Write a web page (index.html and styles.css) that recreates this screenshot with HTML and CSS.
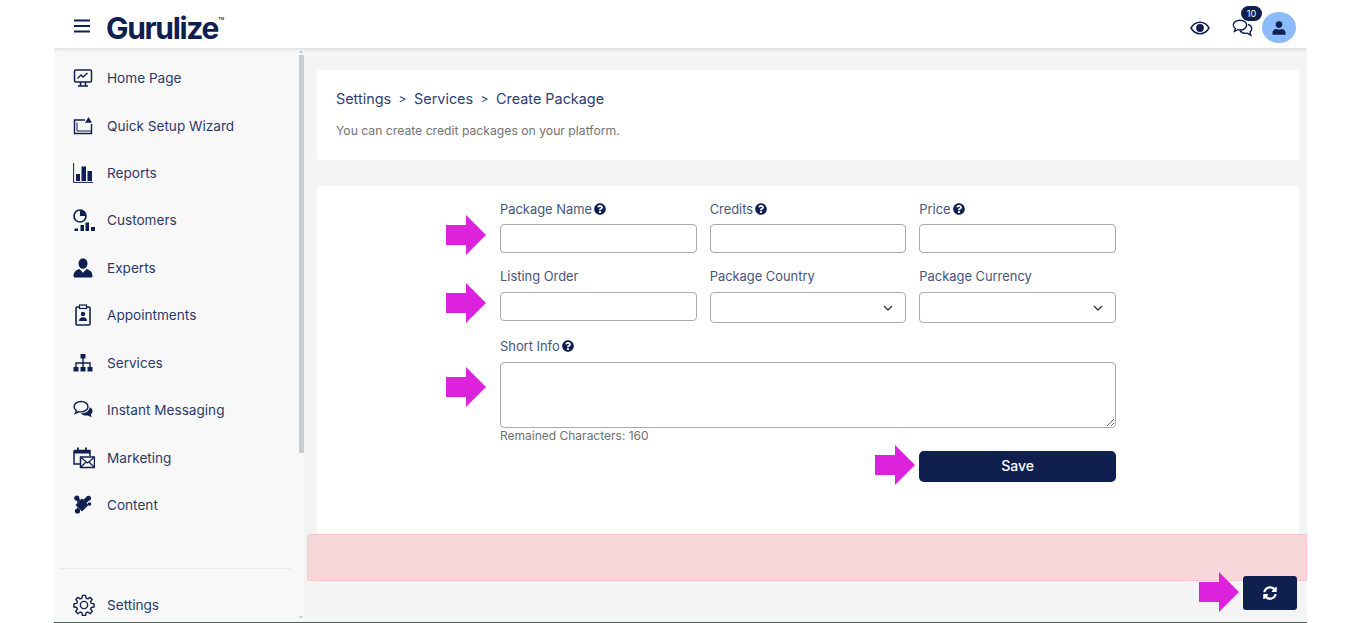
FILE: index.html
```html
<!DOCTYPE html>
<html lang="en">
<head>
<meta charset="utf-8">
<title>Gurulize - Create Package</title>
<link rel="stylesheet" href="styles.css">
</head>
<body>
<svg class="defs" width="0" height="0" aria-hidden="true">
  <symbol id="q" viewBox="0 0 512 512"><path d="M504 256c0 136.997-111.043 248-248 248S8 392.997 8 256C8 119.083 119.043 8 256 8s248 111.083 248 248zM262.655 90c-54.497 0-89.255 22.957-116.549 63.758-3.536 5.286-2.353 12.415 2.715 16.258l34.699 26.31c5.205 3.947 12.621 3.008 16.665-2.122 17.864-22.658 30.113-35.797 57.303-35.797 20.429 0 45.698 13.148 45.698 32.958 0 14.976-12.363 22.667-32.534 33.976C247.128 238.528 216 254.941 216 296v4c0 6.627 5.373 12 12 12h56c6.627 0 12-5.373 12-12v-1.333c0-28.462 83.186-29.647 83.186-106.667 0-58.002-60.165-102-116.531-102zM256 338c-25.365 0-46 20.635-46 46 0 25.364 20.635 46 46 46s46-20.636 46-46c0-25.365-20.635-46-46-46z"/></symbol>
  <symbol id="arrow" viewBox="0 0 40 40"><path d="M0 10h20V0l20 20-20 20V30H0z"/></symbol>
  <symbol id="chev" viewBox="0 0 12 8"><path d="M2 2 6 6l4-4" fill="none" stroke="currentColor" stroke-width="1.300"/></symbol>
</svg>
<div class="app">
  <header class="topbar">
    <div class="brand">
      <svg class="burger" viewBox="0 0 16 14"><path d="M0 1.500h16M0 7h16M0 12.500h16" stroke="currentColor" stroke-width="1.800"/></svg>
      <span class="logo">Gurulize<sup class="tm">TM</sup></span>
    </div>
    <div class="tools">
      <svg class="tool-eye" viewBox="0 0 20 14"><path d="M1 7c2.200-3.800 5.400-5.700 9-5.700S16.800 3.200 19 7c-2.200 3.800-5.400 5.700-9 5.700S3.200 10.800 1 7z" fill="none" stroke="currentColor" stroke-width="1.500"/><circle cx="10" cy="7" r="3.900" fill="currentColor"/></svg>
      <div class="chat">
        <svg class="tool-chat" viewBox="0 0 21 18"><path d="M8 1.200c3.700 0 6.600 2.100 6.600 4.900s-2.900 4.900-6.600 4.900c-.8 0-1.500-.1-2.200-.3L2.500 12.300l.9-2.600C2 8.800 1.300 7.500 1.300 6.100 1.300 3.300 4.300 1.200 8 1.200z" fill="none" stroke="currentColor" stroke-width="1.400"/><path d="M16 5.500c2.300.7 3.700 2.300 3.700 4.200 0 1.300-.7 2.500-1.800 3.300l.9 3.200-3.600-2c-3 .5-5.800-.6-7.200-2.700" fill="none" stroke="currentColor" stroke-width="1.400"/></svg>
        <span class="badge">10</span>
      </div>
      <div class="avatar">
        <svg viewBox="0 0 14 14"><circle cx="7" cy="3.600" r="3.300"/><path d="M0.500 13.800v-2c0-2.500 2-3.800 3.800-3.800.9.400 1.800.600 2.700.6s1.800-.2 2.700-.6c1.800 0 3.800 1.300 3.800 3.800v2z"/></svg>
      </div>
    </div>
  </header>

  <div class="body">
    <aside class="sidebar">
      <div class="side-col">
        <nav class="nav">
          <a class="nav-item"><svg class="ico" viewBox="0 0 20 20"><rect x="1.500" y="2" width="17" height="12" rx="1.500" fill="none" stroke="currentColor" stroke-width="1.500"/><path d="M4.500 10.500 8 7l2 2 4.500-4" fill="none" stroke="currentColor" stroke-width="1.300"/><path d="M7.500 14v3.500M12.500 14v3.500M5 18h10" stroke="currentColor" stroke-width="1.500"/></svg>Home Page</a>
          <a class="nav-item"><svg class="ico" viewBox="0 0 20 20"><path d="M12 4H1.500v13.500h17V8" fill="none" stroke="currentColor" stroke-width="1.400"/><path d="M4 15V6.500" stroke="currentColor" stroke-width="1"/><path d="M4 15h14" stroke="currentColor" stroke-width="1"/><path d="M15.500 1 19 6.800h-7z" fill="currentColor"/></svg>Quick Setup Wizard</a>
          <a class="nav-item"><svg class="ico" viewBox="0 0 20 20"><path d="M.6 0v19.400h19.400" fill="none" stroke="currentColor" stroke-width="1"/><path d="M3 11h4v7H3zM8.500 3.500h4.500V18H8.500zM14.500 8H19v10h-4.500z" fill="currentColor"/></svg>Reports</a>
          <a class="nav-item"><svg class="ico ico-lg" viewBox="0 0 22 22"><circle cx="7" cy="7" r="6" fill="none" stroke="currentColor" stroke-width="1.700"/><path d="M7 7V1a6 6 0 0 1 6 6z" fill="currentColor"/><path d="M1.500 19.500h3.500V22H1.500zM7.500 16h3.500v6H7.500zM12.500 13.500H16V22h-3.500zM18 18h4v4h-4z" fill="currentColor"/></svg>Customers</a>
          <a class="nav-item"><svg class="ico" viewBox="0 0 20 20"><ellipse cx="10" cy="5.500" rx="4.500" ry="5.300" fill="currentColor"/><path d="M0.500 18c0-3.800 2.800-6.200 6-7l3.500 3.800 3.500-3.800c3.200.8 6 3.200 6 7 0 .8-.6 1.500-1.500 1.500H2c-.9 0-1.500-.7-1.500-1.500z" fill="currentColor"/></svg>Experts</a>
          <a class="nav-item"><svg class="ico ico-tall" viewBox="0 0 20 22"><rect x="3" y="3" width="14" height="18" rx="1" fill="none" stroke="currentColor" stroke-width="1.600"/><rect x="6.500" y="1" width="7" height="3.500" fill="#f8f8f8" stroke="currentColor" stroke-width="1.200"/><circle cx="10" cy="10" r="2.200" fill="currentColor"/><path d="M6 17c0-2.500 1.800-3.700 4-3.700s4 1.200 4 3.700z" fill="currentColor"/></svg>Appointments</a>
          <a class="nav-item"><svg class="ico" viewBox="0 0 20 20"><path d="M7.500 1h5v4.500h-5zM.5 14h5v4.500h-5zM7.500 14h5v4.500h-5zM14.500 14h5v4.500h-5z" fill="currentColor"/><path d="M10 5v9M3 14v-4h14v4" fill="none" stroke="currentColor" stroke-width="1.400"/></svg>Services</a>
          <a class="nav-item"><svg class="ico" viewBox="0 0 21 20"><path d="M8.500 1c4 0 7.200 2.400 7.200 5.500s-3.200 5.500-7.200 5.500c-.9 0-1.600-.1-2.400-.3L2.500 13.500l1-3C2 9.500 1.200 8.100 1.200 6.500 1.200 3.400 4.500 1 8.500 1z" fill="none" stroke="currentColor" stroke-width="1.500"/><path d="M17.500 7c2 1 3.200 2.500 3 4.500-.1 1.200-.8 2.200-1.800 3l.8 3.200-3.800-2c-3 .6-6-.2-7.700-2.300 4 .5 9-1.500 9.500-6.400z" fill="currentColor"/></svg>Instant Messaging</a>
          <a class="nav-item"><svg class="ico ico-lg" viewBox="0 0 22 22"><path d="M1 3.500h16V9M1 3.500V17h6" fill="none" stroke="currentColor" stroke-width="1.500"/><path d="M1 3h16v3.500H1zM4 .5h1.800v3H4zM12 .5h1.800v3H12z" fill="currentColor"/><rect x="7.500" y="10" width="14" height="10.500" fill="#f8f8f8" stroke="currentColor" stroke-width="1.500"/><path d="m8 10.500 6.500 5.500 6.500-5.500M8 20l5-5M21 20l-5-5" fill="none" stroke="currentColor" stroke-width="1.200"/></svg>Marketing</a>
          <a class="nav-item"><svg class="ico" viewBox="0 0 20 20"><g fill="currentColor"><path d="M9 3.500 15.500 10 9 16.500 2.500 10z"/><circle cx="3.800" cy="3" r="2.600"/><path d="m3 3 5 1.500L4.500 8z"/><circle cx="15.500" cy="3.200" r="2.500"/><path d="m10 5 4-3.500 2 4-3 3z"/><circle cx="4.500" cy="16" r="2.600"/><path d="m4 12 3 3-3 2z"/><circle cx="16.500" cy="9" r="1.800"/></g></svg>Content</a>
        </nav>
        <div class="side-foot">
          <a class="nav-item nav-item-foot"><svg class="ico ico-lg" viewBox="0 0 24 24"><path d="M10.300 1.500h3.400l.5 3 1.900.8 2.500-1.800 2.400 2.400-1.800 2.500.8 1.900 3 .5v3.400l-3 .5-.8 1.900 1.800 2.500-2.400 2.400-2.500-1.800-1.900.8-.5 3h-3.400l-.5-3-1.900-.8-2.500 1.800-2.400-2.400 1.800-2.500-.8-1.900-3-.5v-3.400l3-.5.8-1.900-1.800-2.500 2.400-2.400 2.500 1.800 1.900-.8z" fill="none" stroke="currentColor" stroke-width="1.500" stroke-linejoin="round"/><circle cx="12" cy="12" r="4" fill="none" stroke="currentColor" stroke-width="1.500"/></svg>Settings</a>
        </div>
      </div>
      <div class="scroll">
        <span class="scroll-up"></span>
        <div class="scroll-thumb"></div>
        <span class="scroll-down"></span>
      </div>
    </aside>

    <main class="main">
      <section class="card head-card">
        <p class="crumbs"><span>Settings</span><span class="sep">&gt;</span><span>Services</span><span class="sep">&gt;</span><span>Create Package</span></p>
        <p class="sub">You can create credit packages on your platform.</p>
      </section>

      <section class="card form-card">
        <form class="form">
          <div class="field"><label class="label">Package Name<svg class="help"><use href="#q"/></svg></label><input class="control" type="text"></div>
          <div class="field"><label class="label">Credits<svg class="help"><use href="#q"/></svg></label><input class="control" type="text"></div>
          <div class="field"><label class="label">Price<svg class="help"><use href="#q"/></svg></label><input class="control" type="text"></div>
          <div class="field"><label class="label label-loose">Listing Order</label><input class="control" type="text"></div>
          <div class="field"><label class="label label-loose">Package Country</label><div class="select"><svg class="chev"><use href="#chev"/></svg></div></div>
          <div class="field"><label class="label label-loose">Package Currency</label><div class="select"><svg class="chev"><use href="#chev"/></svg></div></div>
          <div class="field field-wide"><label class="label label-loose">Short Info<svg class="help"><use href="#q"/></svg></label><textarea class="area"></textarea><span class="remain">Remained Characters: 160</span></div>
          <button class="save" type="button">Save</button>
        </form>
        <svg class="arrow a1"><use href="#arrow"/></svg>
        <svg class="arrow a2"><use href="#arrow"/></svg>
        <svg class="arrow a3"><use href="#arrow"/></svg>
        <svg class="arrow a4"><use href="#arrow"/></svg>
      </section>

      <div class="alert"></div>

      <div class="actions">
        <svg class="arrow a5"><use href="#arrow"/></svg>
        <button class="refresh" type="button"><svg viewBox="0 0 512 512"><path d="M370.72 133.28C339.458 104.008 298.888 87.962 255.848 88c-77.458.068-144.328 53.178-162.791 126.85-1.344 5.363-6.122 9.15-11.651 9.15H24.103c-7.498 0-13.194-6.807-11.807-14.176C33.933 94.924 134.813 8 256 8c66.448 0 126.791 26.136 171.315 68.685L463.03 40.97C478.149 25.851 504 36.559 504 57.941V192c0 13.255-10.745 24-24 24H345.941c-21.382 0-32.09-25.851-16.971-40.971l41.75-41.749zM32 296h134.059c21.382 0 32.09 25.851 16.971 40.971l-41.75 41.75c31.262 29.273 71.835 45.319 114.876 45.28 77.418-.07 144.315-53.144 162.787-126.849 1.344-5.363 6.122-9.15 11.651-9.15h57.304c7.498 0 13.194 6.807 11.807 14.176C478.067 417.076 377.187 504 256 504c-66.448 0-126.791-26.136-171.315-68.685L48.97 471.03C33.851 486.149 8 475.441 8 454.059V320c0-13.255 10.745-24 24-24z"/></svg></button>
      </div>
    </main>
  </div>
</div>
</body>
</html>
```

FILE: styles.css
```css
* { box-sizing: border-box; }
html, body { margin: 0; padding: 0; height: 100%; background: #fff; overflow: hidden; }
body { font-family: Inter, "Noto Sans", "Liberation Sans", sans-serif; color: #2c3a6a; }
.defs { position: absolute; }

.app { margin: 0 54px; width: 1253px; height: 623px; display: flex; flex-direction: column; border-bottom: 1px solid #4c5f50; overflow: hidden; }

.topbar { height: 48px; flex: none; display: flex; align-items: center; justify-content: space-between; background: #fff; box-shadow: 0 1px 4px rgba(0,0,0,.14); position: relative; z-index: 2; padding: 7px 11px 0 20px; }
.brand { display: flex; align-items: center; gap: 16px; }
.burger { width: 16px; height: 14px; color: #0f2050; position: relative; top: -2px; }
.logo { font-size: 30px; font-weight: 700; letter-spacing: -1.35px; color: #0f2050; line-height: 1; }
.tm { font-size: 4px; font-weight: 500; letter-spacing: 0; vertical-align: 19px; line-height: 0; }
.tools { display: flex; align-items: center; }
.tool-eye { width: 20px; height: 14px; color: #0f2050; margin-right: 22px; }
.chat { position: relative; width: 21px; height: 18px; margin-right: 9px; }
.tool-chat { width: 21px; height: 18px; color: #0f2050; display: block; }
.badge { position: absolute; left: 9px; top: -13px; width: 21px; height: 15px; border-radius: 8px; background: #0f2050; color: #fff; font-size: 9px; line-height: 15px; text-align: center; }
.avatar { width: 34px; height: 31px; border-radius: 50%; background: #8cbbfb; display: flex; align-items: center; justify-content: center; }
.avatar svg { width: 14px; height: 14px; fill: #0f2050; }

.body { flex: 1; display: flex; min-height: 0; }

.sidebar { width: 250px; flex: none; background: #f8f8f8; display: flex; }
.side-col { flex: 1; min-width: 0; display: flex; flex-direction: column; padding: 6.4px 7px 0 6px; }
.nav { display: flex; flex-direction: column; flex: none; height: 513.6px; }
.nav-item { height: 47.44px; flex: none; display: flex; align-items: center; gap: 14px; font-size: 13.6px; color: #2c3a6a; padding-left: 13px; }
.nav-item-foot { height: 36px; }
.ico { width: 20px; height: 20px; flex: none; color: #0f2050; }
.ico-lg { width: 22px; height: 22px; margin-right: -2px; }
.ico-tall { height: 22px; }
.side-foot { flex: none; border-top: 1px solid #e9e9e9; padding-top: 18px; }
.scroll { width: 6px; flex: none; padding-top: 2px; display: flex; flex-direction: column; align-items: center; }
.scroll-up { width: 0; height: 0; border: 2px solid transparent; border-top: 0; border-bottom: 3px solid #c9ccd2; margin-bottom: 2px; }
.scroll-thumb { height: 398px; background: #c9ccd2; width: 5px; }
.scroll-down { width: 0; height: 0; border: 2px solid transparent; border-bottom: 0; border-top: 3px solid #c9ccd2; margin-top: auto; margin-bottom: 3px; }

.main { flex: 1; min-width: 0; background: #f4f4f4; padding: 22px 8px 0 13px; display: flex; flex-direction: column; }
.card { background: #fff; border-radius: 3px; }
.head-card { height: 90px; padding: 20px 19px 0; }
.crumbs { margin: 0; display: flex; font-size: 14.4px; line-height: 18px; color: #2f3e74; }
.sep { margin: 0 7.5px; font-size: 12px; }
.sub { margin: 15px 0 0; font-size: 12.2px; line-height: 16px; color: #737373; }

.form-card { height: 348px; margin-top: 26px; position: relative; padding: 14px 0 0 183px; border-radius: 3px 3px 0 0; }
.form { width: 616px; display: grid; grid-template-columns: repeat(3, 1fr); column-gap: 13px; }
.field { display: flex; flex-direction: column; }
.label { display: flex; align-items: center; gap: 2px; height: 18px; font-size: 12.9px; color: #47557f; margin-bottom: 6px; }
.label-loose { margin-bottom: 7px; }
.help { width: 12px; height: 12px; fill: #0f2050; flex: none; }
.control { height: 29px; border: 1px solid #aaa; border-radius: 4px; background: #fff; width: 100%; padding: 0; margin-bottom: 14px; }
.select { height: 31px; border: 1px solid #aaa; border-radius: 4px; background: #fff; display: flex; align-items: center; justify-content: flex-end; padding-right: 11px; margin-bottom: 14px; color: #333; }
.chev { width: 12px; height: 8px; }
.field-wide { grid-column: 1 / -1; }
.area { height: 66px; width: 100%; border: 1px solid #aaa; border-radius: 4px; background: #fff; display: block; padding: 0; margin: 0; }
.remain { font-size: 12px; line-height: 16px; color: #6f6f6f; }
.save { grid-column: 3; height: 31px; margin-top: 7px; padding: 0 0 2px; border: 0; border-radius: 5px; background: #0f2050; color: #fff; font: 500 14px Inter, sans-serif; }

.alert { height: 47px; flex: none; margin: 0 -8px 0 -10px; background: #f8d7da; border: 1px solid #f5c6cb; border-radius: 3px 0 0 3px; }

.actions { display: flex; justify-content: flex-end; align-items: center; margin: -5px 2px 0 0; position: relative; }
.refresh { width: 54px; height: 34px; border: 0; border-radius: 3px; background: #0f2050; display: flex; align-items: center; justify-content: center; padding: 0; }
.refresh svg { width: 14px; height: 14px; fill: #fff; }

.arrow { position: absolute; width: 40px; height: 40px; fill: #dc22dc; }
.a1 { left: 129px; top: 29px; }
.a2 { left: 129px; top: 97px; }
.a3 { left: 129px; top: 181px; }
.a4 { left: 558px; top: 259px; }
.a5 { right: 58px; top: -4px; }
```
